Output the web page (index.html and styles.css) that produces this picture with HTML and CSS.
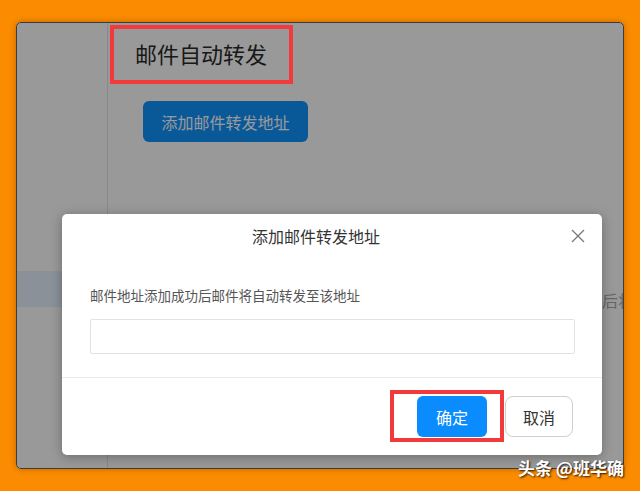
FILE: index.html
```html
<!DOCTYPE html>
<html lang="zh-CN">
<head>
    <meta charset="UTF-8">
    <meta name="viewport" content="width=device-width, initial-scale=1.0">
    <title>邮件自动转发</title>
    <link rel="stylesheet" href="styles.css">
</head>
<body>
    <div class="window">
        <aside class="sidebar">
            <div class="side-item active"></div>
        </aside>
        <main class="main">
            <h1 class="page-title">邮件自动转发</h1>
            <button class="btn btn-add">添加邮件转发地址</button>
            <p class="page-tip">功后将自动转发</p>
        </main>

        <!-- dim layer + dialog -->
        <div class="mask"></div>
        <div class="dialog">
            <div class="dialog-header">
                <span class="dialog-title">添加邮件转发地址</span>
                <span class="dialog-close">
                    <svg width="14" height="14" viewBox="0 0 14 14">
                        <path d="M1 1 L13 13 M13 1 L1 13" stroke="#777" stroke-width="1.3" fill="none"/>
                    </svg>
                </span>
            </div>
            <div class="dialog-body">
                <p class="dialog-text">邮件地址添加成功后邮件将自动转发至该地址</p>
                <input class="dialog-input" type="text">
            </div>
            <div class="dialog-footer">
                <button class="btn btn-ok">确定</button>
                <button class="btn btn-cancel">取消</button>
            </div>
        </div>
    </div>

    <!-- red highlight frames -->
    <div class="mark mark-title"></div>
    <div class="mark mark-ok"></div>

    <div class="watermark">头条 @班华确</div>
</body>
</html>
```

FILE: styles.css
```css
/* page */
* {
    box-sizing: border-box;
}
body {
    margin: 0;
    padding: 22px 16px 0 16px;
    height: 491px;
    overflow: hidden;
    background-color: #fb8b00;
    font-family: "Noto Sans CJK SC", "Noto Sans", sans-serif;
    position: relative;
}
.window {
    position: relative;
    display: flex;
    height: 447px;
    background-color: #fff;
    border: 1px solid #3c3c3c;
    border-radius: 5px;
    overflow: hidden;
    box-shadow: 0 0 6px rgba(0, 0, 0, 0.25);
}

/* underlying page */
.sidebar {
    width: 91px;
    flex-shrink: 0;
    border-right: 1px solid #e4e4e4;
    padding-top: 248px;
}
.side-item {
    height: 36px;
}
.side-item.active {
    background-color: #e6f2ff;
}
.main {
    flex: 1;
    padding: 15px 0 0 27px;
    white-space: nowrap;
}
.page-title {
    margin: 0;
    font-size: 22px;
    line-height: 30px;
    font-weight: normal;
    color: #2a2a2a;
}
.btn {
    font-family: inherit;
    font-size: 16px;
    border: none;
    cursor: pointer;
}
.btn-add {
    margin: 33px 0 0 8px;
    width: 165px;
    height: 41px;
    background-color: #1094ff;
    color: #fff;
    border-radius: 6px;
}
/* tail of the hint line, mostly behind the dialog */
.page-tip {
    margin: 147px 0 0 451px;
    font-size: 16px;
    line-height: 22px;
    color: #aaa;
}

/* dim layer */
.mask {
    position: absolute;
    inset: 0;
    background-color: rgba(0, 0, 0, 0.4);
}

/* dialog */
.dialog {
    position: absolute;
    left: 45px;
    top: 191px;
    width: 540px;
    background-color: #fff;
    border-radius: 5px;
    box-shadow: 0 2px 12px rgba(0, 0, 0, 0.3);
}
.dialog-header {
    display: flex;
    align-items: center;
    height: 44px;
    padding-right: 16px;
}
.dialog-title {
    flex: 1;
    text-align: center;
    font-size: 16px;
    color: #333;
}
.dialog-close {
    width: 16px;
    display: flex;
    justify-content: center;
}
.dialog-body {
    padding: 27px 27px 23px 28px;
}
.dialog-text {
    margin: 0;
    font-size: 13.5px;
    line-height: 20px;
    color: #555;
}
.dialog-input {
    display: block;
    width: 100%;
    height: 35px;
    margin-top: 14px;
    border: 1px solid #e2e2e2;
    border-radius: 2px;
    outline: none;
}
.dialog-footer {
    display: flex;
    justify-content: flex-end;
    gap: 18px;
    padding: 18px 29px 18px 0;
    border-top: 1px solid #ebebeb;
}
.btn-ok {
    width: 70px;
    height: 41px;
    background-color: #0a8cff;
    color: #fff;
    border-radius: 6px;
}
.btn-cancel {
    width: 68px;
    height: 41px;
    background-color: #fff;
    color: #333;
    border: 1px solid #cfcfcf;
    border-radius: 8px;
}

/* highlight frames */
.mark {
    position: absolute;
    border: 4px solid #f23a3c;
}
.mark-title {
    left: 110px;
    top: 25px;
    width: 183px;
    height: 59px;
}
.mark-ok {
    left: 390px;
    top: 390px;
    width: 114px;
    height: 52px;
}

.watermark {
    position: absolute;
    right: 16px;
    bottom: 12px;
    font-size: 17px;
    font-weight: 600;
    line-height: 22px;
    color: #fff;
    text-shadow: 1px 1px 2px rgba(0, 0, 0, 0.85);
}
```
